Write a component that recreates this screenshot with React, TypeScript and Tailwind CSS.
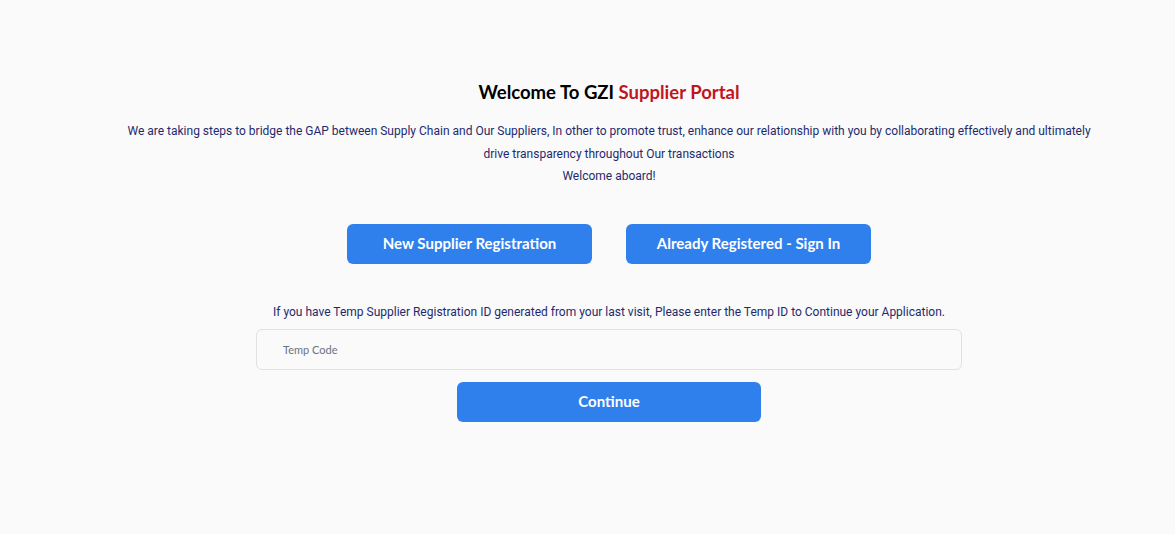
export default function App() {
  return (
    <div className="min-h-[534px] w-full bg-[#f9faf9] pl-[43px]">
      <div className="flex flex-col items-center pt-[80px]">
        <h1 className="font-['Lato',sans-serif] text-[18.5px] font-bold leading-[24px] text-black">
          Welcome To GZI <span className="text-[#c0161e]">Supplier Portal</span>
        </h1>
        <div className="mt-[16px] text-center font-['Roboto',sans-serif] text-[12px] leading-[22.5px] text-[#1f2a6e]">
          <p>
            We are taking steps to bridge the GAP between Supply Chain and Our Suppliers, In other to promote trust, enhance our relationship with you by collaborating effectively and ultimately
          </p>
          <p>drive transparency throughout Our transactions</p>
          <p>Welcome aboard!</p>
        </div>
        <div className="mt-[36px] flex gap-[34px]">
          <button className="h-[40px] w-[245px] rounded-[6px] bg-[#2f80ed] font-['Lato',sans-serif] text-[15px] font-bold text-white">
            New Supplier Registration
          </button>
          <button className="h-[40px] w-[245px] rounded-[6px] bg-[#2f80ed] font-['Lato',sans-serif] text-[15px] font-bold text-white">
            Already Registered - Sign In
          </button>
        </div>
        <p className="mt-[39px] font-['Roboto',sans-serif] text-[12px] leading-[18px] text-[#1f2a6e]">
          If you have Temp Supplier Registration ID generated from your last visit, Please enter the Temp ID to Continue your Application.
        </p>
        <input
          className="mt-[8px] h-[41px] w-[706px] rounded-[6px] border border-[#dfe1e4] bg-[#f9faf9] px-[26px] font-['Lato',sans-serif] text-[11px] text-[#4b5563] outline-none placeholder:text-[#6b7280]"
          placeholder="Temp Code"
        />
        <button className="mt-[12px] h-[40px] w-[304px] rounded-[6px] bg-[#2f80ed] font-['Lato',sans-serif] text-[15px] font-bold text-white">
          Continue
        </button>
      </div>
    </div>
  );
}
